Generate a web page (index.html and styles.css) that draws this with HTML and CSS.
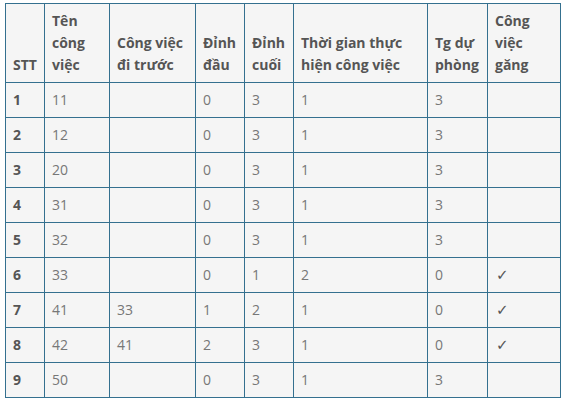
FILE: index.html
```html
<!DOCTYPE html>
<html lang="vi">
<head>
<meta charset="utf-8">
<link rel="stylesheet" href="styles.css">
</head>
<body>
<div class="wrap">
<table class="tbl">
<colgroup>
<col class="c1"><col class="c2"><col class="c3"><col class="c4"><col class="c5"><col class="c6"><col class="c7"><col class="c8">
</colgroup>
<thead>
<tr><th>STT</th><th>Tên công việc</th><th>Công việc đi trước</th><th>Đỉnh đầu</th><th>Đỉnh cuối</th><th>Thời gian thực hiện công việc</th><th>Tg dự phòng</th><th>Công việc găng</th></tr>
</thead>
<tbody>
<tr><td class="n">1</td><td>11</td><td></td><td>0</td><td>3</td><td>1</td><td>3</td><td></td></tr>
<tr><td class="n">2</td><td>12</td><td></td><td>0</td><td>3</td><td>1</td><td>3</td><td></td></tr>
<tr><td class="n">3</td><td>20</td><td></td><td>0</td><td>3</td><td>1</td><td>3</td><td></td></tr>
<tr><td class="n">4</td><td>31</td><td></td><td>0</td><td>3</td><td>1</td><td>3</td><td></td></tr>
<tr><td class="n">5</td><td>32</td><td></td><td>0</td><td>3</td><td>1</td><td>3</td><td></td></tr>
<tr><td class="n">6</td><td>33</td><td></td><td>0</td><td>1</td><td>2</td><td>0</td><td class="ck">✓</td></tr>
<tr><td class="n">7</td><td>41</td><td>33</td><td>1</td><td>2</td><td>1</td><td>0</td><td class="ck">✓</td></tr>
<tr><td class="n">8</td><td>42</td><td>41</td><td>2</td><td>3</td><td>1</td><td>0</td><td class="ck">✓</td></tr>
<tr><td class="n">9</td><td>50</td><td></td><td>0</td><td>3</td><td>1</td><td>3</td><td></td></tr>
</tbody>
</table>
</div>
</body>
</html>
```
FILE: styles.css
```css
html, body {
  margin: 0;
  padding: 0;
  background: #ffffff;
}
.wrap {
  padding: 3px 0 0 5px;
}
.tbl {
  border-collapse: collapse;
  table-layout: fixed;
  width: 555px;
  font-family: "Open Sans", "DejaVu Sans", sans-serif;
  font-size: 14px;
  line-height: 22px;
  background: #f5f5f5;
  color: #777777;
}
.c1 { width: 39px; }
.c2 { width: 65px; }
.c3 { width: 86px; }
.c4 { width: 49px; }
.c5 { width: 49px; }
.c6 { width: 134px; }
.c7 { width: 60px; }
.c8 { width: 73px; }
.tbl th, .tbl td {
  border: 1px solid #34708f;
  padding: 6px 7px 6px 7px;
  text-align: left;
  vertical-align: middle;
}
.tbl th {
  font-weight: 700;
  color: #555555;
  vertical-align: bottom;
}
.tbl td.n {
  font-weight: 700;
  color: #555555;
}
.tbl td.ck {
  font-family: "DejaVu Sans", sans-serif;
  font-size: 15px;
  font-weight: 700;
  color: #555555;
  padding-left: 8px;
}
```
